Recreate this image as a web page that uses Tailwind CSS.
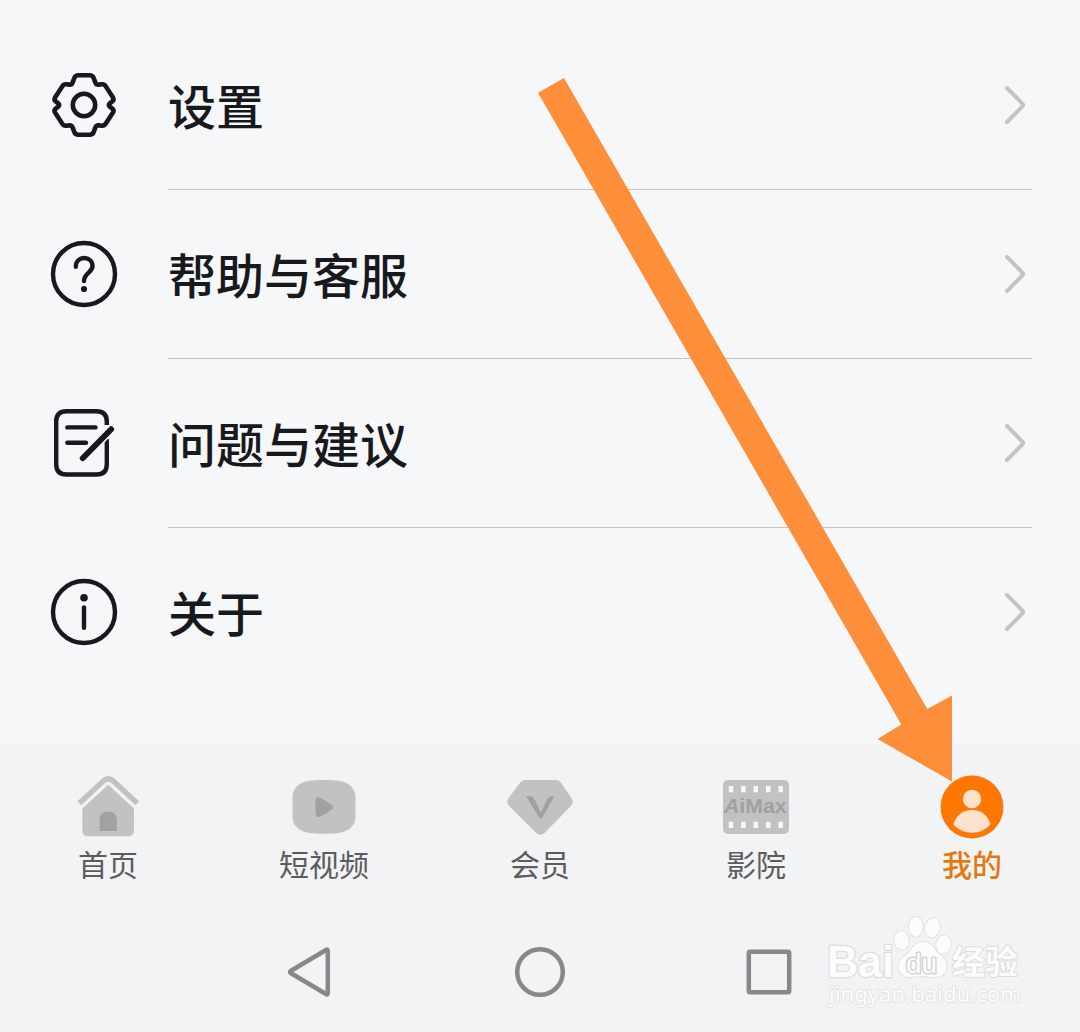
<!DOCTYPE html>
<html lang="zh-CN">
<head>
<meta charset="utf-8">
<meta name="viewport" content="width=device-width, initial-scale=1">
<title>我的</title>
<script src="https://cdn.jsdelivr.net/npm/@tailwindcss/browser@4"></script>
</head>
<body class="bg-[#f6f7f9] font-['Noto_Sans_CJK_SC',sans-serif]">
<div class="relative flex h-[1032px] w-[1080px] flex-col overflow-hidden bg-[#f6f7f9]">

  <main class="flex h-[744px] shrink-0 flex-col pt-[21px] pl-12 pr-12 text-[48px] font-medium text-[#17191c]">
    <div class="flex h-[169px] items-stretch gap-12">
      <svg class="mb-px size-[72px] self-center" viewBox="0 0 72 72" fill="none" stroke="currentColor" stroke-width="4.6" stroke-linejoin="round">
        <path d="M30.5 6.2H41.5Q44.8 6.2 45.8 9.2L47.4 13.6Q48.2 15.8 50.8 15.6L53.6 15.3Q56.3 15 57.8 17.4L64.8 28.2Q66.4 30.8 64.3 32.4L61.8 34.3Q59.8 36 61.8 37.7L64.3 39.6Q66.4 41.2 64.8 43.8L57.8 54.6Q56.3 57 53.6 56.7L50.8 56.4Q48.2 56.2 47.4 58.4L45.8 62.8Q44.8 65.8 41.5 65.8H30.5Q27.2 65.8 26.2 62.8L24.6 58.4Q23.8 56.2 21.2 56.4L18.4 56.7Q15.7 57 14.2 54.6L7.2 43.8Q5.6 41.2 7.7 39.6L10.2 37.7Q12.2 36 10.2 34.3L7.7 32.4Q5.6 30.8 7.2 28.2L14.2 17.4Q15.7 15 18.4 15.3L21.2 15.6Q23.8 15.8 24.6 13.6L26.2 9.2Q27.2 6.2 30.5 6.2Z"/>
        <circle cx="36" cy="36" r="11.2"/>
      </svg>
      <div class="flex flex-1 items-center justify-between border-b border-[#c3c4c6]">
        <span class="pb-[3px]">设置</span>
        <svg class="h-10 w-[30px]" viewBox="0 0 30 40" fill="none" stroke="#c3c4c6" stroke-width="4" stroke-linecap="round" stroke-linejoin="round"><path d="M5 3L20.6 18.8Q21.6 20 20.6 21.2L5 37"/></svg>
      </div>
    </div>
    <div class="flex h-[169px] items-stretch gap-12">
      <svg class="mb-px size-[72px] self-center" viewBox="0 0 72 72" fill="none" stroke="currentColor" stroke-width="4.4" stroke-linecap="round">
        <circle cx="36" cy="36" r="31"/>
        <path d="M27.8 28.7C27.8 23 31.5 20 36.2 20S44.5 23.3 44.5 28.2C44.5 34.5 36 35 36 43"/>
        <circle cx="36" cy="51" r="3.1" fill="currentColor" stroke="none"/>
      </svg>
      <div class="flex flex-1 items-center justify-between border-b border-[#c3c4c6]">
        <span class="pb-[3px]">帮助与客服</span>
        <svg class="h-10 w-[30px]" viewBox="0 0 30 40" fill="none" stroke="#c3c4c6" stroke-width="4" stroke-linecap="round" stroke-linejoin="round"><path d="M5 3L20.6 18.8Q21.6 20 20.6 21.2L5 37"/></svg>
      </div>
    </div>
    <div class="flex h-[169px] items-stretch gap-12">
      <svg class="mb-px size-[72px] self-center" viewBox="0 0 72 72" fill="none" stroke="currentColor" stroke-width="4.4" stroke-linecap="round">
        <path stroke-linecap="butt" d="M58.8 18V14.6Q58.8 4.3 48.5 4.3H18.5Q8.2 4.3 8.2 14.6V57.2Q8.2 67.5 18.5 67.5H48.5Q58.8 67.5 58.8 57.2V32"/>
        <path d="M19.3 20.4H47.5M19.3 35.8H38"/>
        <path stroke="#f6f7f9" stroke-width="9" stroke-linecap="butt" d="M37 49L61 24.4"/>
        <path stroke-width="5.8" d="M34.7 51.2L63.2 22.2"/>
      </svg>
      <div class="flex flex-1 items-center justify-between border-b border-[#c3c4c6]">
        <span class="pb-[3px]">问题与建议</span>
        <svg class="h-10 w-[30px]" viewBox="0 0 30 40" fill="none" stroke="#c3c4c6" stroke-width="4" stroke-linecap="round" stroke-linejoin="round"><path d="M5 3L20.6 18.8Q21.6 20 20.6 21.2L5 37"/></svg>
      </div>
    </div>
    <div class="flex h-[169px] items-stretch gap-12">
      <svg class="mb-px size-[72px] self-center" viewBox="0 0 72 72" fill="none" stroke="currentColor" stroke-width="4.4" stroke-linecap="round">
        <circle cx="36" cy="36" r="31"/>
        <circle cx="36" cy="21.7" r="3.8" fill="currentColor" stroke="none"/>
        <path d="M36 31.5V51.7"/>
      </svg>
      <div class="flex flex-1 items-center justify-between border-b border-transparent">
        <span class="pb-[3px]">关于</span>
        <svg class="h-10 w-[30px]" viewBox="0 0 30 40" fill="none" stroke="#c3c4c6" stroke-width="4" stroke-linecap="round" stroke-linejoin="round"><path d="M5 3L20.6 18.8Q21.6 20 20.6 21.2L5 37"/></svg>
      </div>
    </div>
  </main>

  <footer class="flex flex-1 flex-col bg-[#f2f3f5]">
    <nav class="grid grid-cols-5 pt-[27px] pb-1 text-[30px] leading-[40px] text-[#5c5c5d]">
      <a class="flex flex-col items-center">
        <svg class="size-[72px]" viewBox="0 0 72 72" fill="#c1c2c3">
          <path d="M7.3 32.3L31.3 10Q36.3 5.8 41.3 10L65.3 32.3" fill="none" stroke="#c1c2c3" stroke-width="5.4"/>
          <path d="M36.3 13.8L62 37.5V59.3Q62 65.3 56 65.3H16.3Q10.3 65.3 10.3 59.3V37.5Z"/>
          <path d="M27.6 60V48.8Q27.6 40.6 36.2 40.6T44.8 48.8V60Z" fill="#a0a1a2"/>
        </svg>
        <span>首页</span>
      </a>
      <a class="flex flex-col items-center">
        <svg class="size-[72px]" viewBox="0 0 72 72" fill="#c1c2c3">
          <path d="M36 9C43 9 50 9.3 54 10.5C63 13 67.5 18.5 67.5 27V45C67.5 53.5 63 58.7 54 61.2C50 62.3 43 62.7 36 62.7S22 62.3 18 61.2C9 58.7 4.5 53.5 4.5 45V27C4.5 18.5 9 13 18 10.5C22 9.3 29 9 36 9Z"/>
          <path d="M30.5 26.2Q36.5 28.5 44.3 34.3Q46.4 36.2 44.3 38Q37 43.5 31.5 45.9Q28.5 46.6 27.9 44Q26.8 36 27.6 28.4Q28 25.6 30.5 26.2Z" fill="#a0a1a2"/>
        </svg>
        <span>短视频</span>
      </a>
      <a class="flex flex-col items-center">
        <svg class="size-[72px]" viewBox="0 0 72 72" fill="#c1c2c3">
          <path d="M21.5 9H51.5Q54.5 9 56.6 11.2L67.3 26.7Q70.4 31.2 66.7 35.2L41 61.5Q36.3 66 31.8 61.5L5.3 35.2Q1.6 31.2 4.9 26.7L16.4 11.2Q18.5 9 21.5 9Z"/>
          <path d="M22 25.3H27.2Q28.8 25.3 29.5 26.8L36.8 41.2L43.2 28.2Q44.6 25.3 47.4 25.3H50.4L38.6 46.3Q36.8 48.8 35 46.3Z" fill="#a0a1a2"/>
        </svg>
        <span>会员</span>
      </a>
      <a class="flex flex-col items-center">
        <svg class="size-[72px]" viewBox="0 0 72 72" fill="#c1c2c3">
          <rect x="3" y="9" width="66" height="54" rx="5"/>
          <path fill="#f7f8f9" d="M8.8 15h4.5v6.3h-4.5zM21.1 15h4.5v6.3h-4.5zM33.5 15h4.5v6.3h-4.5zM46 15h4.5v6.3h-4.5zM58.4 15h4.5v6.3h-4.5zM8.8 50.7h4.5v6.3h-4.5zM21.1 50.7h4.5v6.3h-4.5zM33.5 50.7h4.5v6.3h-4.5zM46 50.7h4.5v6.3h-4.5zM58.4 50.7h4.5v6.3h-4.5z"/>
          <text x="4" y="42.2" font-family="Liberation Sans" font-size="20.5" fill="#a0a1a2" font-weight="700" textLength="62.5" lengthAdjust="spacingAndGlyphs"><tspan font-style="italic">A</tspan>iMax</text>
        </svg>
        <span>影院</span>
      </a>
      <a class="flex flex-col items-center font-medium text-[#e5790f]">
        <svg class="size-[72px]" viewBox="0 0 72 72">
          <circle cx="36" cy="36" r="31.5" fill="#fd7702"/>
          <circle cx="36" cy="28" r="9.2" fill="#ffe2cc"/>
          <path d="M36 39C45.5 39 52.5 45 54.4 53.5Q47 61.7 36 61.7T17.4 53.5C19.5 45 26.5 39 36 39Z" fill="#ffe2cc"/>
        </svg>
        <span>我的</span>
      </a>
    </nav>

    <div class="flex h-[170px] items-center justify-center gap-[180px]">
      <svg class="h-[52px] w-12" viewBox="0 0 48 52" fill="none" stroke="#87888a" stroke-width="4.5" stroke-linejoin="round"><path d="M38.4 3.8L3 24.8Q1 26 3 27.2L38.4 48.2Q39.8 49 39.8 47V5Q39.8 3 38.4 3.8Z"/></svg>
      <svg class="h-[52px] w-12 overflow-visible" viewBox="0 0 48 52" fill="none" stroke="#87888a" stroke-width="4.5"><circle cx="24" cy="26" r="22.8"/></svg>
      <svg class="h-[52px] w-12" viewBox="0 0 48 52" fill="none" stroke="#87888a" stroke-width="4.5"><rect x="4.8" y="5.8" width="40.4" height="40.4" rx="1.5"/></svg>
    </div>
  </footer>

  <!-- Watermark laid over the bottom-right corner -->
  <svg class="absolute left-[820px] top-[910px] h-[105px] w-[215px]" viewBox="820 910 215 105" fill="#fcfcfd" stroke="#dcdddf" stroke-width="1.6" paint-order="stroke" stroke-linejoin="round">
    <text x="827" y="976.5" font-family="Liberation Sans" font-size="44" font-weight="700" textLength="67" lengthAdjust="spacingAndGlyphs" stroke-width="2.4">Bai</text>
    <ellipse cx="901.7" cy="940.5" rx="7.3" ry="9.3" transform="rotate(-8 901.7 940.5)"/>
    <ellipse cx="915.7" cy="926.8" rx="7" ry="10"/>
    <ellipse cx="932.4" cy="927.8" rx="7.3" ry="9.6" transform="rotate(14 932.4 927.8)"/>
    <ellipse cx="943.4" cy="944.6" rx="7.2" ry="9.2" transform="rotate(8 943.4 944.6)"/>
    <path d="M923 941.8Q930 942 934 948Q937 952.5 943 957.5Q948 962.5 946 970Q943 978 933 977Q922 975.5 912 977Q901 978 898.5 969.5Q897.5 962 903.5 957Q909 953 912 948Q916 942 923 941.8Z"/>
    <text x="906" y="972.5" font-family="Liberation Sans" font-size="27" textLength="31" lengthAdjust="spacingAndGlyphs" stroke="#d3d4d7" stroke-width="3">du</text>
    <text x="952" y="974" font-family="Noto Sans CJK SC" font-size="33" font-weight="700" stroke-width="2" textLength="66" lengthAdjust="spacingAndGlyphs">经验</text>
    <text x="829" y="1001.7" font-family="Noto Sans" font-size="21.5" textLength="192" lengthAdjust="spacingAndGlyphs" stroke="#e0e1e3">jingyan.baidu.com</text>
  </svg>

  <!-- Pointer to the profile tab -->
  <svg class="pointer-events-none absolute inset-0 h-[1032px] w-[1080px]" viewBox="0 0 1080 1032"><path fill="#ff8e3a" d="M538 92.7L564 78L927.3 709L952 695.5V781.5L877.5 739L901.3 724.5Z"/></svg>
</div>
</body>
</html>
